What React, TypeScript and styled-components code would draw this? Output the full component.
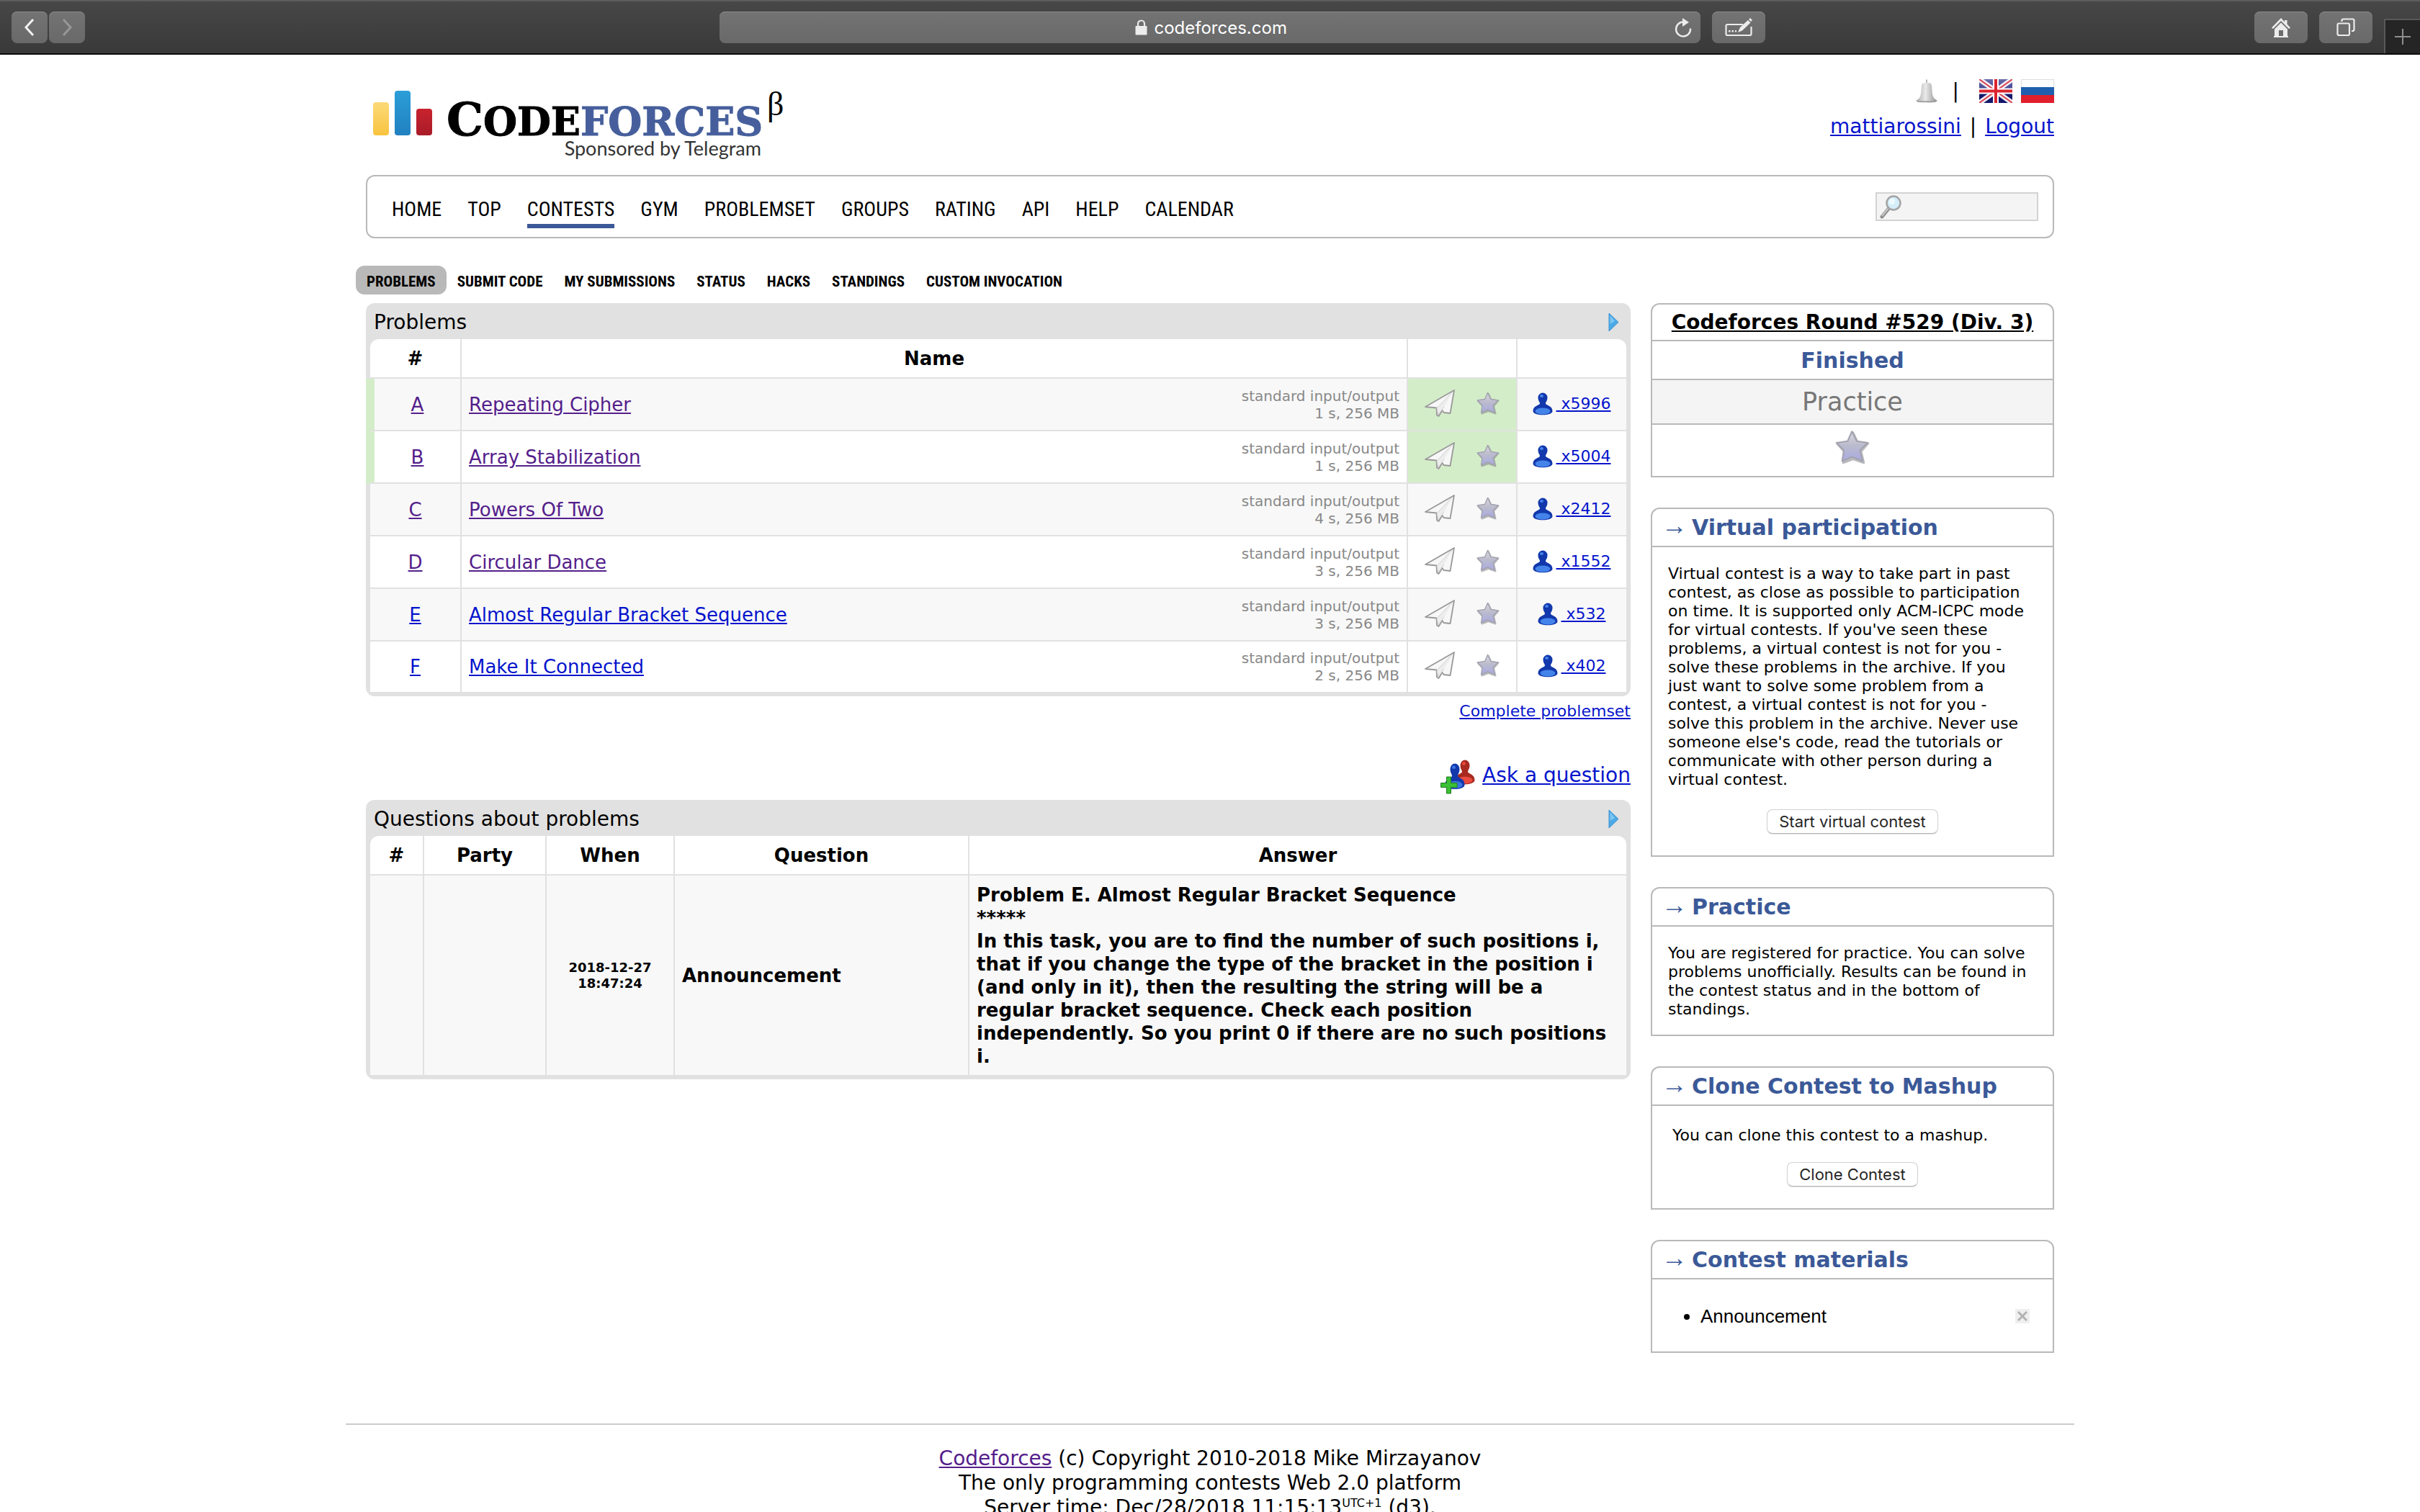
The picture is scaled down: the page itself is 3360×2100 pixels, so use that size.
import React from "react";
import styled, { createGlobalStyle, css } from "styled-components";

const sans = `"DejaVu Sans", Verdana, sans-serif`;
const narrow = `"Liberation Sans Narrow", "Roboto Condensed", "Open Sans Condensed", "Arial Narrow", "Liberation Sans", sans-serif`;
const system = `Inter, "Liberation Sans", sans-serif`;

const color = {
  link: "#0514cc",
  visited: "#54208b",
  brand: "#3b5998",
  line: "#b9b9b9",
  table: "#e1e1e1",
  ok: "#d4edc9",
};

const GlobalStyle = createGlobalStyle`
  *, *::before, *::after { box-sizing: border-box; }
  body { margin: 0; background: #fff; color: #000; font-family: ${sans}; font-size: 28px; line-height: 34px; }
  button, input { font: inherit; color: inherit; margin: 0; padding: 0; border: 0; background: none; }
  ul { list-style: none; margin: 0; padding: 0; }
  h1, h2, p { margin: 0; font: inherit; }
  svg { display: block; flex: none; }
`;

const Window = styled.div`
  height: 100vh;
  overflow: hidden;
`;

/* ---------- browser toolbar ---------- */

const Toolbar = styled.header`
  display: grid;
  grid-template-columns: minmax(0, 1fr) minmax(0, 1362px) minmax(0, 1fr);
  align-items: center;
  height: 76px;
  border-top: 2px solid #5e5e5e;
  border-bottom: 2px solid #0c0c0c;
  background: linear-gradient(#474747, #393939);
`;

const ToolGroup = styled.div<{ $gap: number }>`
  display: flex;
  align-items: center;
  gap: ${(p) => p.$gap}px;
`;

const LeftTools = styled(ToolGroup)`
  padding-left: 16px;
`;

const RightTools = styled.div`
  display: flex;
  align-items: center;
  justify-content: space-between;
  height: 100%;
  padding-left: 16px;
`;

const plate = css`
  height: 44px;
  border-radius: 8px;
  background: linear-gradient(#737373, #696969);
  box-shadow: inset 0 1px #8c8c8c;
`;

const ToolButton = styled.button<{ $width: number }>`
  ${plate}
  display: grid;
  place-items: center;
  width: ${(p) => p.$width}px;
`;

const NewTab = styled.button`
  display: grid;
  place-items: center;
  width: 50px;
  height: 48px;
  margin-top: 24px;
  background: #252525;
  border-left: 2px solid #595959;
  border-top: 2px solid #595959;
`;

const AddressBar = styled.div`
  ${plate}
  display: grid;
  grid-template-columns: 1fr auto 1fr;
  align-items: center;
  padding: 0 12px;
`;

const Address = styled.label`
  grid-column: 2;
  display: flex;
  align-items: center;
  gap: 10px;
  padding-left: 4px;
`;

const AddressInput = styled.input`
  width: 186px;
  padding-top: 2px;
  color: #fff;
  font-family: ${system};
  font-size: 24px;
  line-height: 32px;
`;

const Reload = styled.button`
  justify-self: end;
`;

/* ---------- page frame ---------- */

const Page = styled.div`
  max-width: 2400px;
  margin: 0 auto;
`;

const Content = styled.div`
  padding: 0 28px;
`;

const Header = styled.div`
  display: flex;
  justify-content: space-between;
  height: 167px;
  padding-top: 32px;
`;

const HeaderLinks = styled.div`
  display: flex;
  flex-direction: column;
  align-items: flex-end;
  gap: 13px;
`;

const LangRow = styled.div`
  display: flex;
  align-items: center;
  gap: 12px;
  height: 38px;
`;

const Divider = styled.span`
  padding: 0 16px 0 8px;
`;

const Separator = styled.span`
  padding: 0 3px;
`;

const Link = styled.a<{ $visited?: boolean; $size?: number }>`
  color: ${(p) => (p.$visited ? color.visited : color.link)};
  font-size: ${(p) => (p.$size ? `${p.$size}px` : "inherit")};
  text-decoration: underline;
`;

const NavBar = styled.nav`
  display: flex;
  align-items: center;
  justify-content: space-between;
  height: 88px;
  padding: 0 20px 0 34px;
  border: 2px solid ${color.line};
  border-radius: 12px;
`;

const NavList = styled.ul`
  display: flex;
  gap: 36px;
  padding-top: 18px;
`;

const NavLink = styled.a<{ $active?: boolean }>`
  display: block;
  padding-bottom: 4px;
  border-bottom: 6px solid ${(p) => (p.$active ? color.brand : "transparent")};
  color: #000;
  font-family: ${narrow};
  font-size: 28px;
  line-height: 32px;
  text-decoration: none;
  text-transform: uppercase;
`;

const Search = styled.label`
  display: flex;
  align-items: center;
  width: 226px;
  height: 40px;
  padding-left: 4px;
  border: 2px solid #d3d3d3;
  background: #f4f4f4;
`;

const SearchInput = styled.input`
  width: 100%;
  min-width: 0;
  font-size: 22px;
`;

const SubMenu = styled.ul`
  display: flex;
  margin: 38px 0 12px -14px;
`;

const SubLink = styled.a<{ $active?: boolean }>`
  display: block;
  padding: 4px 15px 0;
  border-radius: 12px;
  background: ${(p) => (p.$active ? color.line : "transparent")};
  color: #000;
  font-family: ${narrow};
  font-size: 21px;
  font-weight: 700;
  line-height: 36px;
  text-decoration: none;
  text-transform: uppercase;
`;

const Columns = styled.div`
  display: grid;
  grid-template-columns: minmax(0, 1fr) 560px;
  gap: 28px;
  align-items: start;
`;

/* ---------- data tables ---------- */

const DataBox = styled.section`
  padding: 0 6px 6px;
  border-radius: 12px;
  background: ${color.table};
`;

const DataTitle = styled.div`
  display: flex;
  align-items: center;
  justify-content: space-between;
  height: 50px;
  padding: 3px 10px 0 5px;
`;

const Table = styled.table`
  width: 100%;
  table-layout: fixed;
  border-spacing: 0;
  border-radius: 12px 12px 0 0;
  background: #fff;
  font-size: 26px;
  line-height: 32px;
`;

const Col = styled.col<{ $width?: number }>`
  width: ${(p) => (p.$width ? `${p.$width}px` : "auto")};
`;

const Th = styled.th`
  height: 55px;
  padding: 0;
  border-bottom: 2px solid ${color.table};
  font-weight: 700;

  & + & {
    border-left: 2px solid ${color.table};
  }
`;

const Td = styled.td<{ $center?: boolean; $accepted?: boolean }>`
  height: 73px;
  padding: 0 10px;
  border-bottom: 2px solid ${color.table};
  background: ${(p) => (p.$accepted ? color.ok : "transparent")};
  text-align: ${(p) => (p.$center ? "center" : "left")};

  & + & {
    border-left: 2px solid ${color.table};
  }
`;

const IndexTd = styled(Td)<{ $solved: boolean }>`
  padding: 0;
  ${(p) =>
    p.$solved &&
    css`
      padding-left: 6px;
      box-shadow: -6px 0 ${color.ok}, inset 6px 0 ${color.ok};
    `}
`;

const IconTd = styled(Td)`
  padding: 0;
`;

const Tr = styled.tr`
  &:nth-child(odd) {
    background: #f8f8f8;
  }
  &:last-child td {
    height: 70px;
    border-bottom: 0;
  }
`;

const NameCell = styled.div`
  display: flex;
  align-items: center;
  justify-content: space-between;
`;

const Limits = styled.div`
  color: #888;
  font-size: 20px;
  line-height: 24px;
  text-align: right;
`;

const Actions = styled.div`
  display: flex;
  align-items: center;
  justify-content: center;
  gap: 30px;
  padding-bottom: 4px;
`;

const Solvers = styled.div`
  display: flex;
  align-items: center;
  justify-content: center;
  gap: 4px;
  padding-bottom: 2px;
  white-space: pre;
`;

const MessageTd = styled(Td)`
  padding: 11px 8px 10px 10px;
  font-weight: 700;
`;

const DateTd = styled(MessageTd)`
  padding: 10px;
  font-size: 18px;
  line-height: 22px;
`;

const Below = styled.div`
  margin-top: 8px;
  font-size: 22px;
  line-height: 26px;
  text-align: right;
`;

const AskRow = styled.div`
  display: flex;
  justify-content: flex-end;
  gap: 10px;
  height: 48px;
  margin: 54px 0 8px;
  line-height: 44px;
`;

/* ---------- sidebar ---------- */

const Sidebar = styled.aside`
  display: flex;
  flex-direction: column;
  gap: 42px;
`;

const Card = styled.section`
  border: 2px solid ${color.line};
  border-radius: 12px 12px 0 0;
`;

const CardTitle = styled.h2`
  display: flex;
  gap: 6px;
  padding-left: 13px;
  border-bottom: 2px solid ${color.line};
  color: ${color.brand};
  font-size: 30px;
  font-weight: 700;
  line-height: 51px;
`;

const Arrow = styled.span`
  font-family: "Liberation Sans", sans-serif;
  font-size: 36px;
  font-weight: 400;
  line-height: 46px;
`;

const CardBody = styled.div<{ $roomy?: boolean }>`
  padding: ${(p) => (p.$roomy ? "28px 28px 22px" : "24px 32px 22px 22px")};
  font-size: 22px;
  line-height: 26px;
`;

const ButtonRow = styled.div<{ $top: number }>`
  display: flex;
  justify-content: center;
  margin: ${(p) => p.$top}px 0 8px;
`;

const VirtualRow = styled(ButtonRow)`
  padding-left: 10px;
`;

const PushButton = styled.button`
  height: 34px;
  padding: 0 16px;
  border: 1px solid #d2d2d2;
  border-bottom-color: #b4b4b4;
  border-radius: 8px;
  background: #fff;
  box-shadow: 0 1px 1px rgba(0, 0, 0, 0.12);
  color: #262626;
  font-family: ${system};
  font-size: 22px;
  line-height: 30px;
`;

const InfoRow = styled.div<{ $kind: "round" | "state" | "practice" | "star" }>`
  display: flex;
  justify-content: center;
  align-items: center;
  & + & {
    border-top: 2px solid ${color.line};
  }
  ${(p) =>
    ({
      round: css`
        height: 49px;
        font-weight: 700;
        a {
          color: #000;
        }
      `,
      state: css`
        height: 54px;
        padding-top: 2px;
        color: ${color.brand};
        font-size: 30px;
        font-weight: 700;
      `,
      practice: css`
        height: 62px;
        background: #f4f4f4;
        color: #777;
        font-size: 35px;
      `,
      star: css`
        height: 73px;
        padding-bottom: 10px;
      `,
    })[p.$kind]}
`;

const Materials = styled.ul`
  padding: 36px 32px 34px 67px;
  font-family: "Liberation Sans", sans-serif;
  font-size: 26px;
  line-height: 30px;
  list-style: disc;
`;

const MaterialRow = styled.div`
  display: flex;
  align-items: center;
  justify-content: space-between;
`;

const PlainLink = styled.a`
  color: #000;
  text-decoration: none;
`;

const Remove = styled.button`
  display: grid;
  place-items: center;
  width: 20px;
  height: 20px;
  background: #efefef;
`;

const Footer = styled.footer`
  margin-top: 98px;
  padding-top: 30px;
  border-top: 2px solid #ccc;
  text-align: center;

  sup {
    font-size: 16px;
    line-height: 0;
    vertical-align: super;
  }
`;

/* ---------- drawings ---------- */

const Chevron = ({ flip }: { flip?: boolean }) => (
  <svg width="16" height="26" viewBox="0 0 16 26" fill="none" stroke={flip ? "#979797" : "#f2f2f2"} strokeWidth="3">
    <path d={flip ? "M3 2 13 13 3 24" : "M13 2 3 13 13 24"} />
  </svg>
);

const LockIcon = () => (
  <svg width="17" height="22" viewBox="0 0 17 22">
    <path d="M4 10V6a4.5 4.5 0 0 1 9 0v4" fill="none" stroke="#ececec" strokeWidth="2.2" />
    <rect x="0.5" y="9" width="16" height="12.5" rx="1" fill="#ececec" />
  </svg>
);

const ReloadIcon = () => (
  <svg width="24" height="28" viewBox="0 0 24 28">
    <path d="M12 6.5A10 10 0 1 0 22 15.5" fill="none" stroke="#ececec" strokeWidth="2.4" />
    <path d="M11 1l9 6-9 6z" fill="#ececec" />
  </svg>
);

const NoteIcon = () => (
  <svg width="38" height="28" viewBox="0 0 38 28">
    <path d="M25 10H3.5a2 2 0 0 0-2 2v11a2 2 0 0 0 2 2h31a2 2 0 0 0 2-2V13" fill="none" stroke="#ececec" strokeWidth="2.2" />
    <path d="M5 18h2.5v2.5H5zM9.5 18H12v2.5H9.5zM14 18h2v2.5h-2z" fill="#ececec" />
    <path d="M18 21l3-7L32 4l3.5 3.5L24 18.5zM33 3l2-2 3 3-2 2z" fill="#ececec" />
  </svg>
);

const HomeIcon = () => (
  <svg width="28" height="28" viewBox="0 0 28 28">
    <path d="M14 1 1 14.5l2 1.5L14 5l11 11 2-1.5-4.5-5V4H19v2.5z" fill="#ececec" />
    <path d="M5 16.5 14 7.5l9 9V27h-6v-9h-6v9H5z" fill="#ececec" />
    <path d="M4 27h20" stroke="#ececec" strokeWidth="2" />
  </svg>
);

const TabsIcon = () => (
  <svg width="26" height="26" viewBox="0 0 26 26" fill="none" stroke="#ececec" strokeWidth="2.2">
    <rect x="1.5" y="7.5" width="16.5" height="16.5" rx="2" />
    <path d="M7.5 5V3.5a2 2 0 0 1 2-2h13a2 2 0 0 1 2 2V16a2 2 0 0 1-2 2H21" />
  </svg>
);

const PlusIcon = () => (
  <svg width="22" height="22" viewBox="0 0 22 22" stroke="#8f8f8f" strokeWidth="2">
    <path d="M11 0v22M0 11h22" />
  </svg>
);

const Logo = () => (
  <svg width="600" height="116" viewBox="0 0 600 116" role="img" aria-label="Codeforces">
    <defs>
      <linearGradient id="lg-y" x2="0" y2="1">
        <stop stopColor="#fcd978" />
        <stop offset="1" stopColor="#f8c440" />
      </linearGradient>
      <linearGradient id="lg-b" x2="0" y2="1">
        <stop stopColor="#2b9ed8" />
        <stop offset="1" stopColor="#2180c0" />
      </linearGradient>
      <linearGradient id="lg-r" x2="0" y2="1">
        <stop stopColor="#c8232f" />
        <stop offset="1" stopColor="#a81c28" />
      </linearGradient>
    </defs>
    <rect x="10" y="34" width="22" height="46" rx="4" fill="url(#lg-y)" />
    <rect x="40" y="18" width="22" height="62" rx="4" fill="url(#lg-b)" />
    <rect x="70" y="43" width="22" height="37" rx="4" fill="url(#lg-r)" />
    <text x="112" y="80" fontFamily='"DejaVu Serif", serif' fontWeight="700" fontSize="54" stroke="#000" strokeWidth="1">
      <tspan fontSize="64">C</tspan>
      <tspan>ODE</tspan>
      <tspan fill="#465f9c" stroke="#465f9c">FORCES</tspan>
    </text>
    <text x="557" y="52" fontFamily='"Liberation Serif", serif' fontSize="46">β</text>
    <text x="549" y="108" textAnchor="end" fontFamily='Lato, "Open Sans", sans-serif' fontSize="27" fill="#333">
      Sponsored by Telegram
    </text>
  </svg>
);

const BellIcon = () => (
  <svg width="32" height="34" viewBox="0 0 32 34">
    <defs>
      <linearGradient id="bell">
        <stop stopColor="#a9a9a9" />
        <stop offset="0.45" stopColor="#e9e9e9" />
        <stop offset="1" stopColor="#8f8f8f" />
      </linearGradient>
    </defs>
    <path d="M16 0.5v6" stroke="#b5b5b5" strokeWidth="2" />
    <path d="M10 6q6-3 12 0c2 3 1 14 3 18 1 3 4 4 6 6-6 4-24 4-30 0 2-2 5-3 6-6 2-4 1-15 3-18z" fill="url(#bell)" />
    <path d="M3 31h26" stroke="#999" strokeWidth="1.5" />
  </svg>
);

const UkFlag = () => (
  <svg width="46" height="34" viewBox="0 0 46 34">
    <defs>
      <linearGradient id="uk" x2="0" y2="1">
        <stop stopColor="#6a6da8" />
        <stop offset="0.5" stopColor="#3c3f8c" />
        <stop offset="0.55" stopColor="#15186c" />
        <stop offset="1" stopColor="#15186c" />
      </linearGradient>
      <clipPath id="ukc">
        <rect width="46" height="33" />
      </clipPath>
    </defs>
    <g clipPath="url(#ukc)">
      <rect width="46" height="33" fill="url(#uk)" />
      <path d="M0 0l46 33M46 0L0 33" stroke="#f4f0f6" strokeWidth="7" />
      <path d="M0 0l46 33M46 0L0 33" stroke="#d84450" strokeWidth="2" />
      <path d="M23 0v33M0 16.5h46" stroke="#fff" strokeWidth="8" />
      <path d="M23 0v33M0 16.5h46" stroke="#dc2430" strokeWidth="4" />
    </g>
  </svg>
);

const RuFlag = () => (
  <svg width="46" height="34" viewBox="0 0 46 34">
    <rect x="0.5" y="0.5" width="45" height="32" fill="#fff" stroke="#ddd" />
    <rect y="11" width="46" height="12" fill="#1f5fae" />
    <rect y="22" width="46" height="11" fill="#e01f2d" />
  </svg>
);

const GlassIcon = () => (
  <svg width="32" height="34" viewBox="0 0 32 34">
    <path d="M12 20 3 31" stroke="#8d8d8d" strokeWidth="5" strokeLinecap="round" />
    <path d="M12 19 3 30" stroke="#c9c9c9" strokeWidth="2" />
    <circle cx="19" cy="12" r="9.5" fill="#d4eefa" stroke="#a3a3a3" strokeWidth="2.5" />
    <circle cx="17" cy="10" r="4" fill="#effaff" />
  </svg>
);

const PlayIcon = () => (
  <svg width="15" height="27" viewBox="0 0 15 27">
    <path d="M1 1 14 13.5 1 26z" fill="#4ba9e6" stroke="#3f93d0" strokeLinejoin="round" />
    <path d="M2.5 4 9 12l-6.5 4z" fill="#7cc6f2" />
  </svg>
);

const PlaneIcon = () => (
  <svg width="42" height="38" viewBox="0 0 42 38">
    <path
      d="M1 24 41 1 35.5 33l-9-1-2-3-5 8-2.5-1.5-0.5-10z"
      fill="#f7f7f7"
      stroke="#999"
      strokeWidth="1.8"
      strokeLinejoin="round"
    />
    <path d="M39 3 17 26l2 9 5-7 3-4" fill="#ededed" stroke="#cfcfcf" strokeWidth="1" />
  </svg>
);

const StarIcon = ({ size }: { size: number }) => (
  <svg width={size} height={size} viewBox="0 0 32 32">
    <defs>
      <linearGradient id="star" x2="0" y2="1">
        <stop stopColor="#dadae0" />
        <stop offset="0.45" stopColor="#bcbccd" />
        <stop offset="1" stopColor="#a9a9e2" />
      </linearGradient>
    </defs>
    <path
      d="M16.5 2.5 20.5 11 30.5 12.5 24 20 26.5 30.5 16.5 27 7.5 30.5 8.8 20.5 2 13 12 11.5z"
      fill="#77777f"
      opacity="0.5"
      stroke="#77777f"
      strokeWidth="2"
      strokeLinejoin="round"
    />
    <path
      d="M15.5 1.5 20 10.5 30 12 23 19 25.5 29 15.5 25 6.5 29 8 19 1.2 12 11.5 10.5z"
      fill="url(#star)"
      stroke="#a3a3b0"
      strokeWidth="1.4"
      strokeLinejoin="round"
    />
  </svg>
);

const Figure = ({ dark, light }: { dark: string; light: string }) => (
  <>
    <path
      d="M7.5 7a6.5 6.5 0 0 1 13 0c0 5-2.5 6-2.5 8.5 1 3 9.500 2.500 9.500 10.500 0 7-27 7-27 0 0-8 8.500-7.500 9.500-10.500 0-2.500-2.500-3.500-2.500-8.500z"
      fill={dark}
    />
    <ellipse cx="14" cy="26" rx="10.5" ry="4.5" fill={light} />
    <ellipse cx="12.5" cy="5" rx="2.5" ry="2" fill={light} />
  </>
);

const PersonIcon = () => (
  <svg width="28" height="32" viewBox="0 0 28 32">
    <Figure dark="#1238ac" light="#4484ea" />
  </svg>
);

const AskIcon = () => (
  <svg width="48" height="48" viewBox="0 0 48 48">
    <g transform="translate(20 0) scale(1 1.1)">
      <Figure dark="#a82a20" light="#ea4c40" />
    </g>
    <g transform="translate(6 5) scale(1 1.15)">
      <Figure dark="#1238ac" light="#3c76e0" />
    </g>
    <path d="M8.5 24h6v8.5H23v6h-8.5V47h-6v-8.5H0.5v-6h8z" fill="#3cbf34" stroke="#1d7d1b" />
  </svg>
);

const CrossIcon = () => (
  <svg width="14" height="14" viewBox="0 0 14 14" stroke="#b3b3b3" strokeWidth="3">
    <path d="M1 1l12 12M13 1 1 13" />
  </svg>
);

/* ---------- data ---------- */

const nav = ["Home", "Top", "Contests", "Gym", "Problemset", "Groups", "Rating", "API", "Help", "Calendar"];
const subNav = ["Problems", "Submit code", "My submissions", "Status", "Hacks", "Standings", "Custom invocation"];

const problems = [
  { id: "A", name: "Repeating Cipher", limits: "1 s, 256 MB", count: 5996, solved: true, visited: true },
  { id: "B", name: "Array Stabilization", limits: "1 s, 256 MB", count: 5004, solved: true, visited: true },
  { id: "C", name: "Powers Of Two", limits: "4 s, 256 MB", count: 2412, solved: false, visited: true },
  { id: "D", name: "Circular Dance", limits: "3 s, 256 MB", count: 1552, solved: false, visited: true },
  { id: "E", name: "Almost Regular Bracket Sequence", limits: "3 s, 256 MB", count: 532, solved: false, visited: false },
  { id: "F", name: "Make It Connected", limits: "2 s, 256 MB", count: 402, solved: false, visited: false },
];

const SideCard = ({ title, children }: { title: string; children: React.ReactNode }) => (
  <Card>
    <CardTitle>
      <Arrow>→</Arrow>
      {title}
    </CardTitle>
    {children}
  </Card>
);

const BrowserBar = () => (
  <Toolbar>
    <LeftTools $gap={2}>
      <ToolButton $width={50} aria-label="Back">
        <Chevron />
      </ToolButton>
      <ToolButton $width={50} aria-label="Forward">
        <Chevron flip />
      </ToolButton>
    </LeftTools>
    <AddressBar>
      <Address>
        <LockIcon />
        <AddressInput aria-label="Address" defaultValue="codeforces.com" />
      </Address>
      <Reload aria-label="Reload">
        <ReloadIcon />
      </Reload>
    </AddressBar>
    <RightTools>
      <ToolButton $width={74} aria-label="Annotate">
        <NoteIcon />
      </ToolButton>
      <ToolGroup $gap={16}>
        <ToolButton $width={74} aria-label="Home">
          <HomeIcon />
        </ToolButton>
        <ToolButton $width={74} aria-label="Show tabs">
          <TabsIcon />
        </ToolButton>
        <NewTab aria-label="New tab">
          <PlusIcon />
        </NewTab>
      </ToolGroup>
    </RightTools>
  </Toolbar>
);

const ProblemsTable = () => (
  <DataBox>
    <DataTitle>
      Problems
      <PlayIcon />
    </DataTitle>
    <Table>
      <colgroup>
        <Col $width={125} />
        <Col />
        <Col $width={152} />
        <Col $width={153} />
      </colgroup>
      <thead>
        <tr>
          <Th>#</Th>
          <Th>Name</Th>
          <Th aria-label="Actions" />
          <Th aria-label="Solved by" />
        </tr>
      </thead>
      <tbody>
        {problems.map((p) => (
          <Tr key={p.id}>
            <IndexTd $center $solved={p.solved}>
              <Link href="#" $visited={p.visited}>
                {p.id}
              </Link>
            </IndexTd>
            <Td>
              <NameCell>
                <Link href="#" $visited={p.visited}>
                  {p.name}
                </Link>
                <Limits>
                  standard input/output
                  <br />
                  {p.limits}
                </Limits>
              </NameCell>
            </Td>
            <IconTd $accepted={p.solved}>
              <Actions>
                <PlaneIcon />
                <StarIcon size={32} />
              </Actions>
            </IconTd>
            <IconTd>
              <Solvers>
                <PersonIcon />
                <Link href="#" $size={22}>{` x${p.count}`}</Link>
              </Solvers>
            </IconTd>
          </Tr>
        ))}
      </tbody>
    </Table>
  </DataBox>
);

const QuestionsTable = () => (
  <DataBox>
    <DataTitle>
      Questions about problems
      <PlayIcon />
    </DataTitle>
    <Table>
      <colgroup>
        <Col $width={73} />
        <Col $width={170} />
        <Col $width={178} />
        <Col $width={409} />
        <Col />
      </colgroup>
      <thead>
        <tr>
          <Th>#</Th>
          <Th>Party</Th>
          <Th>When</Th>
          <Th>Question</Th>
          <Th>Answer</Th>
        </tr>
      </thead>
      <tbody>
        <Tr>
          <MessageTd />
          <MessageTd />
          <DateTd $center>
            2018-12-27
            <br />
            18:47:24
          </DateTd>
          <MessageTd>Announcement</MessageTd>
          <MessageTd>
            Problem E. Almost Regular Bracket Sequence
            <br />
            *****
            <br />
            In this task, you are to find the number of such positions i, that if you change the type of the bracket in
            the position i (and only in it), then the resulting the string will be a regular bracket sequence. Check
            each position independently. So you print 0 if there are no such positions i.
          </MessageTd>
        </Tr>
      </tbody>
    </Table>
  </DataBox>
);

export default function App() {
  return (
    <Window>
      <GlobalStyle />
      <BrowserBar />
      <Page>
        <Content>
          <Header>
            <a href="#">
              <Logo />
            </a>
            <HeaderLinks>
              <LangRow>
                <BellIcon />
                <Divider>|</Divider>
                <UkFlag />
                <RuFlag />
              </LangRow>
              <div>
                <Link href="#">mattiarossini</Link>
                <Separator> | </Separator>
                <Link href="#">Logout</Link>
              </div>
            </HeaderLinks>
          </Header>
          <NavBar>
            <NavList>
              {nav.map((n) => (
                <li key={n}>
                  <NavLink href="#" $active={n === "Contests"}>
                    {n}
                  </NavLink>
                </li>
              ))}
            </NavList>
            <Search>
              <GlassIcon />
              <SearchInput type="text" aria-label="Search" />
            </Search>
          </NavBar>
          <SubMenu>
            {subNav.map((n) => (
              <li key={n}>
                <SubLink href="#" $active={n === "Problems"}>
                  {n}
                </SubLink>
              </li>
            ))}
          </SubMenu>
          <Columns>
            <main>
              <ProblemsTable />
              <Below>
                <Link href="#">Complete problemset</Link>
              </Below>
              <AskRow>
                <AskIcon />
                <Link href="#">Ask a question</Link>
              </AskRow>
              <QuestionsTable />
            </main>
            <Sidebar>
              <Card>
                <InfoRow $kind="round">
                  <Link href="#">Codeforces Round #529 (Div. 3)</Link>
                </InfoRow>
                <InfoRow $kind="state">Finished</InfoRow>
                <InfoRow $kind="practice">Practice</InfoRow>
                <InfoRow $kind="star">
                  <StarIcon size={48} />
                </InfoRow>
              </Card>
              <SideCard title="Virtual participation">
                <CardBody>
                  <p>
                    Virtual contest is a way to take part in past contest, as close as possible to participation on
                    time. It is supported only ACM-ICPC mode for virtual contests. If you've seen these problems, a
                    virtual contest is not for you - solve these problems in the archive. If you just want to solve
                    some problem from a contest, a virtual contest is not for you - solve this problem in the archive.
                    Never use someone else's code, read the tutorials or communicate with other person during a virtual
                    contest.
                  </p>
                  <VirtualRow $top={28}>
                    <PushButton>Start virtual contest</PushButton>
                  </VirtualRow>
                </CardBody>
              </SideCard>
              <SideCard title="Practice">
                <CardBody>
                  You are registered for practice. You can solve problems unofficially. Results can be found in the
                  contest status and in the bottom of standings.
                </CardBody>
              </SideCard>
              <SideCard title="Clone Contest to Mashup">
                <CardBody $roomy>
                  <p>You can clone this contest to a mashup.</p>
                  <ButtonRow $top={24}>
                    <PushButton>Clone Contest</PushButton>
                  </ButtonRow>
                </CardBody>
              </SideCard>
              <SideCard title="Contest materials">
                <Materials>
                  <li>
                    <MaterialRow>
                      <PlainLink href="#">Announcement</PlainLink>
                      <Remove aria-label="Remove">
                        <CrossIcon />
                      </Remove>
                    </MaterialRow>
                  </li>
                </Materials>
              </SideCard>
            </Sidebar>
          </Columns>
        </Content>
        <Footer>
          <Link href="#" $visited>
            Codeforces
          </Link>{" "}
          (c) Copyright 2010-2018 Mike Mirzayanov
          <br />
          The only programming contests Web 2.0 platform
          <br />
          Server time: Dec/28/2018 11:15:13<sup>UTC+1</sup> (d3).
        </Footer>
      </Page>
    </Window>
  );
}
